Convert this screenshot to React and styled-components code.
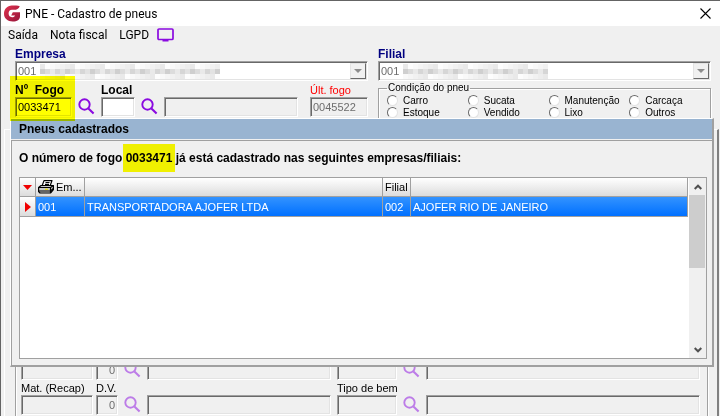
import React from "react";
import styled, { createGlobalStyle } from "styled-components";

const companies = [
  {
    code: "001",
    name: "TRANSPORTADORA AJOFER LTDA",
    branch: "002",
    branchName: "AJOFER RIO DE JANEIRO",
  },
];

const conditions = [
  "Carro",
  "Sucata",
  "Manutenção",
  "Carcaça",
  "Estoque",
  "Vendido",
  "Lixo",
  "Outros",
];

function SearchButton({ label, faded }) {
  return (
    <IconButton type="button" aria-label={label} $faded={faded}>
      <svg width="17" height="17" viewBox="0 0 17 17" fill="none" stroke="#8a0ae0">
        <circle cx="6.5" cy="6.5" r="5.2" strokeWidth="1.9" />
        <path d="M10.4 10.4 L15.6 15.6" strokeWidth="2.1" />
      </svg>
    </IconButton>
  );
}

// random looking grey blocks that hide the company name
function Mosaic({ columns }) {
  const blocks = [];
  for (let i = 0; i < columns; i++) {
    for (let j = 0; j < 3; j++) {
      const shade = j === 1 ? 196 + ((i * 37) % 5) * 8 : 228 + ((i * 29 + j * 11) % 6) * 5;
      blocks.push(
        <rect
          key={i + "-" + j}
          x={i * 5}
          y={j * 5}
          width="5"
          height="5"
          fill={`rgb(${shade},${shade},${shade})`}
        />
      );
    }
  }
  return (
    <Redacted width={columns * 5} height="15" aria-hidden="true">
      {blocks}
    </Redacted>
  );
}

function Combo({ id, label, columns }) {
  return (
    <div>
      <NavyLabel htmlFor={id}>{label}</NavyLabel>
      <ComboBox>
        <select id={id} disabled defaultValue="001">
          <option value="001">001</option>
        </select>
        <Mosaic columns={columns} />
        <ComboArrow>
          <svg width="8" height="4" viewBox="0 0 8 4">
            <path d="M0 0h8L4 4z" fill="#8c8c8c" />
          </svg>
        </ComboArrow>
      </ComboBox>
    </div>
  );
}

function App() {
  return (
    <Window>
      <GlobalStyle />
      <TitleBar>
        <svg width="17" height="18" viewBox="0 0 17 18">
          <defs>
            <linearGradient id="logo" x1="0" y1="0" x2="1" y2="1">
              <stop offset="0" stopColor="#e0334e" />
              <stop offset="1" stopColor="#96143a" />
            </linearGradient>
          </defs>
          <path
            d="M15.8 1.2C14.6 3.9 12.8 4.8 10 4.8H8C5.8 4.8 4.6 6.3 4.6 8.6s1.3 3.6 3.4 3.6c1.6 0 2.6-.6 3.1-1.8H7.2l1.6-3.2h7.2v4.2c0 3-2.9 5.1-7.2 5.1C3.6 16.5 0 13.5 0 8.8S3.2.5 7.8.5h4.4c1.5 0 2.6.2 3.6.7z"
            fill="url(#logo)"
          />
        </svg>
        <h1>PNE - Cadastro de pneus</h1>
        <CloseButton type="button" aria-label="Fechar">
          <svg width="11" height="11" viewBox="0 0 11 11" stroke="#000" strokeWidth="1.1">
            <path d="M.5.5l10 10M10.5.5l-10 10" />
          </svg>
        </CloseButton>
      </TitleBar>
      <MenuBar>
        <MenuItem type="button">Saída</MenuItem>
        <MenuItem type="button">Nota fiscal</MenuItem>
        <MenuItem type="button">LGPD</MenuItem>
        <MonitorButton type="button" aria-label="Monitor">
          <svg width="17" height="14" viewBox="0 0 17 14">
            <rect x="1" y="1" width="15" height="10.5" rx="1" fill="none" stroke="#8a0ae0" strokeWidth="1.7" />
            <path d="M5.5 12.7h6" stroke="#8a0ae0" strokeWidth="1.6" />
          </svg>
        </MonitorButton>
      </MenuBar>

      <TopForm>
        <Column $grow={353}>
          <Combo id="empresa" label="Empresa" columns={36} />
          <FieldRow>
            <Highlighted>
              <BlackLabel htmlFor="fogo">Nº&nbsp; Fogo</BlackLabel>
              <Input id="fogo" defaultValue="0033471" />
            </Highlighted>
            <SearchButton label="Buscar fogo" />
            <Field $width={34}>
              <BlackLabel htmlFor="local">Local</BlackLabel>
              <Input id="local" />
            </Field>
            <SearchButton label="Buscar local" />
            <Field>
              <Input aria-label="Descrição do local" disabled />
            </Field>
            <LastFire>
              <RedLabel htmlFor="ultimo">Últ. fogo</RedLabel>
              <Input id="ultimo" defaultValue="0045522" disabled />
            </LastFire>
          </FieldRow>
        </Column>
        <Column $grow={333}>
          <Combo id="filial" label="Filial" columns={29} />
          <GroupBox>
            <legend>Condição do pneu</legend>
            <RadioGrid>
              {conditions.map((name) => (
                <RadioLabel key={name}>
                  <input type="radio" name="condicao" value={name} />
                  {name}
                </RadioLabel>
              ))}
            </RadioGrid>
          </GroupBox>
        </Column>
      </TopForm>

      <TabPanel>
        <InnerPanel>
          <FieldRow>
            <Field $width={72}>
              <Input aria-label="Material" disabled />
            </Field>
            <Digit $width={22}>
              <Input aria-label="Dígito" defaultValue="0" disabled />
            </Digit>
            <SearchButton label="Buscar material" faded />
            <Field $grow={184}>
              <Input aria-label="Descrição do material" disabled />
            </Field>
            <Code $width={60}>
              <Input aria-label="Código" disabled />
            </Code>
            <SearchButton label="Buscar código" faded />
            <Field $grow={274}>
              <Input aria-label="Descrição do código" disabled />
            </Field>
          </FieldRow>
          <FieldRow>
            <Field $width={72}>
              <Label htmlFor="recap">Mat. (Recap)</Label>
              <Input id="recap" disabled />
            </Field>
            <Digit $width={22}>
              <Label htmlFor="dv">D.V.</Label>
              <Input id="dv" defaultValue="0" disabled />
            </Digit>
            <SearchButton label="Buscar recapagem" faded />
            <Field $grow={184}>
              <Input aria-label="Descrição da recapagem" disabled />
            </Field>
            <Code $width={60}>
              <Label htmlFor="tipo">Tipo de bem</Label>
              <Input id="tipo" disabled />
            </Code>
            <SearchButton label="Buscar tipo de bem" faded />
            <Field $grow={274}>
              <Input aria-label="Descrição do tipo de bem" disabled />
            </Field>
          </FieldRow>
        </InnerPanel>
      </TabPanel>

      <Dialog role="dialog" aria-labelledby="dialog-title">
        <DialogTitle id="dialog-title">Pneus cadastrados</DialogTitle>
        <DialogBody>
          <Message>
            O número de fogo <mark>0033471</mark> já está cadastrado nas seguintes
            empresas/filiais:
          </Message>
          <Grid>
            <TableArea>
              <Table>
                <colgroup>
                  <col width="16" />
                  <col width="49" />
                  <col width="298" />
                  <col width="28" />
                  <col />
                </colgroup>
                <thead>
                  <tr>
                    <th>
                      <svg width="9" height="5" viewBox="0 0 9 5">
                        <path d="M0 0h9L4.5 5z" fill="#f00000" />
                      </svg>
                    </th>
                    <th>
                      <HeaderLabel>
                        <Printer />
                        Em...
                      </HeaderLabel>
                    </th>
                    <th />
                    <th>Filial</th>
                    <th />
                  </tr>
                </thead>
                <tbody>
                  {companies.map((item) => (
                    <tr key={item.code}>
                      <Marker>
                        <svg width="6" height="10" viewBox="0 0 6 10">
                          <path d="M0 0v10L6 5z" fill="#f00000" />
                        </svg>
                      </Marker>
                      <td>{item.code}</td>
                      <td>{item.name}</td>
                      <td>{item.branch}</td>
                      <td>{item.branchName}</td>
                    </tr>
                  ))}
                </tbody>
              </Table>
            </TableArea>
            <ScrollBar>
              <ScrollButton type="button" aria-label="Subir">
                <svg width="8" height="6" viewBox="0 0 8 6" fill="none" stroke="#505050" strokeWidth="2">
                  <path d="M.7 5L4 1.7 7.3 5" />
                </svg>
              </ScrollButton>
              <Thumb />
              <ScrollButton type="button" aria-label="Descer">
                <svg width="8" height="6" viewBox="0 0 8 6" fill="none" stroke="#505050" strokeWidth="2">
                  <path d="M.7 1L4 4.3 7.3 1" />
                </svg>
              </ScrollButton>
            </ScrollBar>
          </Grid>
        </DialogBody>
      </Dialog>
    </Window>
  );
}

function Printer() {
  return (
    <svg width="16" height="14" viewBox="0 0 16 14" stroke="#000" strokeWidth="1.2" strokeLinejoin="round">
      <path d="M4 6L6 .6h8L12 6z" fill="#fff" />
      <path d="M7.5 2.5h4M7 4.3h4" fill="none" />
      <path d="M.6 7.5L3 5.5h12.4v4L12.5 13H2L.6 11.5z" fill="#c8c8c8" />
      <path d="M.6 7.5h12l2.8-2M12.5 7.5V13M.6 11h12l2.8-2.5" fill="none" />
      <path d="M7 9.3h3" stroke="#e8e000" />
    </svg>
  );
}

export default App;

const GlobalStyle = createGlobalStyle`
  * {
    box-sizing: border-box;
  }
  body {
    margin: 0;
    background: #f0f0f0;
    color: #000;
  }
  body, button, input, select {
    font-family: "Liberation Sans", Arial, sans-serif;
    font-size: 11px;
  }
  svg {
    display: block;
    flex-shrink: 0;
  }
`;

const Window = styled.main`
  position: relative;
  display: flex;
  flex-direction: column;
  min-height: 100vh;
  border-top: 1px solid #646464;
  border-left: 1px solid #646464;
`;

const TitleBar = styled.header`
  display: flex;
  align-items: center;
  gap: 4px;
  height: 25px;
  padding: 0 9px 0 3px;
  background: #fff;
  h1 {
    flex: 1;
    margin: 0;
    font: 12px Roboto, sans-serif;
  }
`;

const CloseButton = styled.button`
  padding: 0;
  border: none;
  background: none;
`;

const MenuBar = styled.nav`
  display: flex;
  align-items: center;
  gap: 12px;
  height: 18px;
  padding: 0 7px;
`;

const MenuItem = styled.button`
  padding: 0;
  border: none;
  background: none;
  font: 12px Roboto, sans-serif;
`;

const MonitorButton = styled(CloseButton)`
  margin-left: -4px;
`;

const TopForm = styled.section`
  display: flex;
  align-items: flex-start;
  gap: 10px;
  padding: 3px 9px 0 14px;
`;

const Column = styled.div`
  display: flex;
  flex-direction: column;
  flex: ${(props) => props.$grow} 1 0;
  min-width: 0;
  gap: 2px;
`;

const FieldRow = styled.div`
  display: flex;
  align-items: flex-end;
`;

const Field = styled.div`
  display: flex;
  flex-direction: column;
  flex: ${(props) => (props.$width ? `0 0 ${props.$width}px` : `${props.$grow || 1} 1 0`)};
  min-width: 0;
`;

const Label = styled.label`
  display: block;
  height: 14px;
  line-height: 14px;
  white-space: nowrap;
`;

const BlackLabel = styled(Label)`
  font: bold 12px/14px "Liberation Sans", sans-serif;
`;

const NavyLabel = styled(BlackLabel)`
  color: #000080;
`;

const RedLabel = styled(Label)`
  color: #f00;
`;

const Input = styled.input`
  width: 100%;
  height: 20px;
  padding: 0 2px;
  border: 1px solid;
  border-color: #a0a0a0 #fff #fff #a0a0a0;
  box-shadow: inset 1px 1px #696969, inset -1px -1px #e3e3e3;
  border-radius: 0;
  outline: none;
  background: #fff;
  color: #000;
  &:disabled {
    background: #f0f0f0;
    color: #6d6d6d;
  }
`;

const Highlighted = styled(Field)`
  position: relative;
  flex: 0 0 57px;
  &::after {
    content: "";
    position: absolute;
    z-index: 2;
    inset: -7px -3px -4px -5px;
    background: #ff0;
    mix-blend-mode: multiply;
    pointer-events: none;
  }
`;

const LastFire = styled(Field)`
  flex: 0 0 58px;
  margin-left: 12px;
`;

const Digit = styled(Field)`
  margin-left: 3px;
  input {
    text-align: right;
  }
`;

const Code = styled(Field)`
  margin-left: 6px;
`;

const IconButton = styled.button`
  flex-shrink: 0;
  padding: 0 6px 2px;
  border: none;
  background: none;
  opacity: ${(props) => (props.$faded ? 0.5 : 1)};
`;

const ComboBox = styled.div`
  position: relative;
  height: 20px;
  border: 1px solid;
  border-color: #a0a0a0 #fff #fff #a0a0a0;
  box-shadow: inset 1px 1px #696969, inset -1px -1px #e3e3e3;
  background: #fff;
  select {
    display: block;
    width: 100%;
    height: 18px;
    padding: 0 2px;
    border: none;
    appearance: none;
    background: transparent;
    color: #6d6d6d;
    opacity: 1;
  }
`;

const Redacted = styled.svg`
  position: absolute;
  top: 2px;
  left: 24px;
  opacity: 0.8;
`;

const ComboArrow = styled.span`
  position: absolute;
  top: 1px;
  right: 1px;
  bottom: 1px;
  display: flex;
  align-items: center;
  justify-content: center;
  width: 16px;
  border: 1px solid;
  border-color: #e3e3e3 #696969 #696969 #e3e3e3;
  background: #f0f0f0;
  pointer-events: none;
`;

const GroupBox = styled.fieldset`
  height: 42px;
  min-width: 0;
  margin: 0;
  padding: 0 0 0 8px;
  border: 1px solid #a0a0a0;
  box-shadow: inset 1px 1px #fff, 1px 1px #fff;
  font: 10px "Liberation Sans", sans-serif;
  legend {
    height: 10px;
    line-height: 10px;
    padding: 0 1px;
  }
`;

const RadioGrid = styled.div`
  display: grid;
  grid-template-columns: repeat(4, 1fr);
  padding-top: 1px;
`;

const RadioLabel = styled.label`
  display: flex;
  align-items: center;
  gap: 5px;
  height: 12px;
  white-space: nowrap;
  input {
    flex-shrink: 0;
    appearance: none;
    width: 11px;
    height: 11px;
    margin: 0;
    border: 1px solid;
    border-color: #696969 #e3e3e3 #e3e3e3 #696969;
    border-radius: 50%;
    background: #fff;
  }
`;

const TabPanel = styled.section`
  display: flex;
  flex: 1;
  flex-direction: column;
  margin: 4px 1px 0 3px;
  padding: 20px 9px 0 10px;
  border: solid #fff;
  border-width: 1px 0 0 1px;
  border-right: 2px solid #808080;
`;

const InnerPanel = styled.div`
  display: flex;
  flex: 1;
  flex-direction: column;
  justify-content: flex-end;
  gap: 1px;
  padding: 0 7px 1px 5px;
  border-left: 1px solid #a0a0a0;
  border-right: 1px solid #a0a0a0;
  box-shadow: inset 1px 0 #fff, 1px 0 #fff;
`;

const Dialog = styled.section`
  position: absolute;
  z-index: 1;
  top: 117px;
  left: 9px;
  right: 6px;
  border: 1px solid #fff;
  border-right: 2px solid #a0a0a0;
  border-bottom: 2px solid #a0a0a0;
  background: #f0f0f0;
`;

const DialogTitle = styled.h2`
  height: 20px;
  margin: 0;
  padding: 0 8px;
  background: #99b4d1;
  font: bold 12px/20px "Liberation Sans", sans-serif;
`;

const DialogBody = styled.div`
  margin-top: 1px;
  padding: 0 5px 6px 7px;
  border: 1px solid #a0a0a0;
  border-width: 1px 0 0 1px;
`;

const Message = styled.p`
  margin: 0;
  padding: 3px 0 5px;
  font: bold 12px/28px "Liberation Sans", sans-serif;
  mark {
    display: inline-block;
    padding: 0 3px;
    margin: 0 -3px;
    background: #f0f000;
    color: #000;
  }
`;

const Grid = styled.div`
  display: flex;
  height: 182px;
  border: 1px solid #a0a0a0;
  background: #fff;
`;

const TableArea = styled.div`
  flex: 1;
  min-width: 0;
`;

const Table = styled.table`
  width: 100%;
  table-layout: fixed;
  border-collapse: separate;
  border-spacing: 0;
  th,
  td {
    height: 20px;
    padding: 0 2px;
    border-right: 1px solid #a0a0a0;
    border-bottom: 1px solid #a0a0a0;
    font-weight: normal;
    line-height: 18px;
    text-align: left;
    white-space: nowrap;
  }
  th {
    height: 19px;
    background: linear-gradient(#fff, #dcdcdc);
  }
  td {
    background: linear-gradient(#3393ff, #0070ff);
    color: #fff;
  }
  th:first-child svg {
    margin: 0 auto;
  }
`;

const Marker = styled.td`
  && {
    background: linear-gradient(#fff, #dcdcdc);
  }
  svg {
    margin: 0 auto;
  }
`;

const HeaderLabel = styled.span`
  display: flex;
  align-items: center;
  gap: 2px;
`;

const ScrollBar = styled.div`
  display: flex;
  flex-direction: column;
  width: 17px;
  margin-left: 1px;
  background: #f0f0f0;
`;

const ScrollButton = styled.button`
  display: flex;
  align-items: center;
  justify-content: center;
  height: 17px;
  padding: 0;
  border: none;
  background: none;
  &:last-child {
    margin-top: auto;
  }
`;

const Thumb = styled.div`
  height: 73px;
  margin-right: 1px;
  background: #cdcdcd;
`;
